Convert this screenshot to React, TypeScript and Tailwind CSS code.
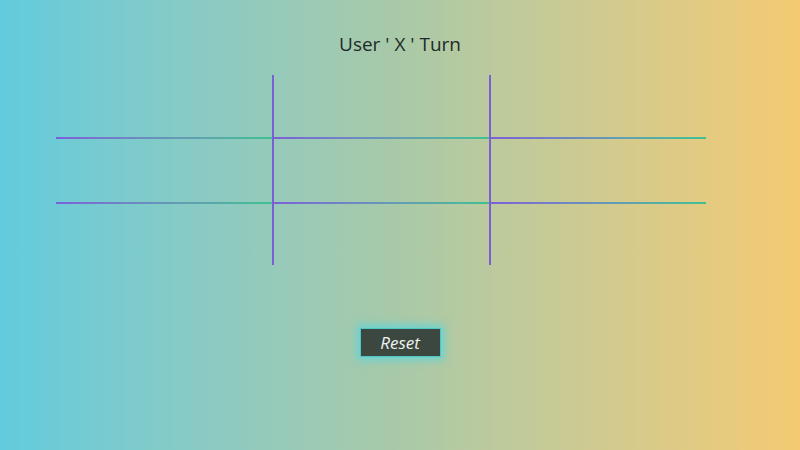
import React, { useState } from "react"

const cells = Array.from({ length: 9 }, (_, i) => i)

export default function App() {
  const [board] = useState<string[]>(Array(9).fill(""))

  return (
    <div
      className="w-[800px] h-[450px] flex flex-col items-center bg-gradient-to-r from-[#61cbdd] via-[#a9c9a8] to-[#f4ca72]"
      style={{ fontFamily: '"Open Sans", "Noto Sans", sans-serif' }}
    >
      <h1 className="mt-[31px] h-[26px] text-[19px] leading-[26px] text-[#1d2b28]">User ' X ' Turn</h1>

      <div className="mt-[18px] self-start ml-[56px] grid grid-cols-[216px_219px_215px] grid-rows-[63px_65px_62px] w-[650px]">
        {cells.map((i) => {
          const row = Math.floor(i / 3)
          const col = i % 3
          return (
            <div
              key={i}
              className={
                "relative flex items-center justify-center " +
                (col === 1 ? "border-x-2 border-[#7b5fd3]" : "")
              }
            >
              <span className="text-3xl text-[#1d2b28]">{board[i]}</span>
              {row < 2 && (
                <div className="absolute left-0 right-0 bottom-[-1px] h-[2px] bg-gradient-to-r from-[#7c5fd8] to-[#3ec091]" />
              )}
            </div>
          )
        })}
      </div>

      <button className="mt-[63px] w-[81px] h-[29px] bg-[#3c4740] border border-[#4fc6c6] shadow-[0_0_8px_3px_rgba(80,215,225,0.75)] text-[#eef2ee] italic text-[17px] leading-none">
        Reset
      </button>
    </div>
  )
}
